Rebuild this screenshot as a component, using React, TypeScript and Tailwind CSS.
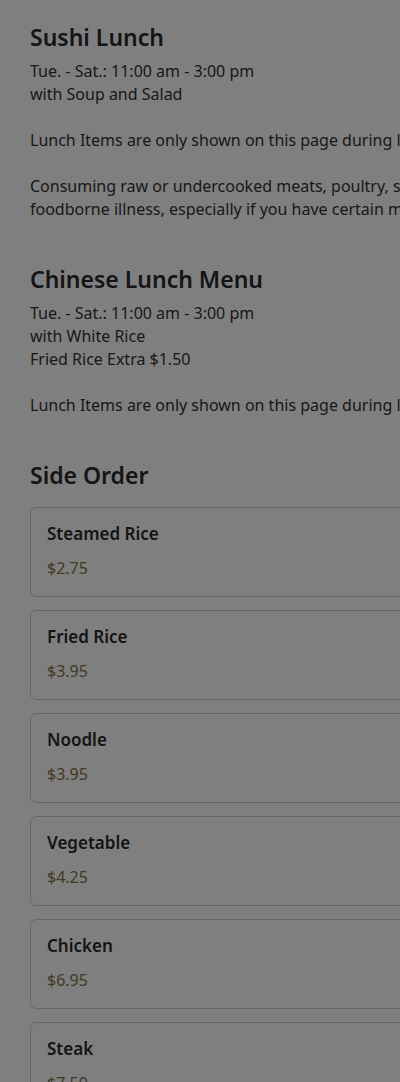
const sides = [
  { name: "Steamed Rice", price: "$2.75" },
  { name: "Fried Rice", price: "$3.95" },
  { name: "Noodle", price: "$3.95" },
  { name: "Vegetable", price: "$4.25" },
  { name: "Chicken", price: "$6.95" },
  { name: "Steak", price: "$7.50" },
];

function Lines({ lines }: { lines: string[] }) {
  return (
    <div className="whitespace-nowrap text-[16px] leading-[23px] text-[#333]">
      {lines.map((l, i) => (
        <div key={i}>{l === "" ? <br /> : l}</div>
      ))}
    </div>
  );
}

export default function App() {
  return (
    <div className="relative w-screen overflow-hidden bg-white font-['Noto_Sans',sans-serif]">
      <div className="w-[720px] px-[30px] pt-[21px] pb-10">
        {/* Sushi */}
        <section>
          <h2 className="mb-[7px] text-[23px] font-semibold leading-8 text-[#2a2a2a]">
            Sushi Lunch
          </h2>
          <Lines
            lines={[
              "Tue. - Sat.: 11:00 am - 3:00 pm",
              "with Soup and Salad",
              "",
              "Lunch Items are only shown on this page during lunch hours.",
              "",
              "Consuming raw or undercooked meats, poultry, seafood, shellfish or eggs may increase your",
              "foodborne illness, especially if you have certain medical conditions.",
            ]}
          />
        </section>

        {/* Chinese */}
        <section className="mt-[42px]">
          <h2 className="mb-[7px] text-[23px] font-semibold leading-8 text-[#2a2a2a]">
            Chinese Lunch Menu
          </h2>
          <Lines
            lines={[
              "Tue. - Sat.: 11:00 am - 3:00 pm",
              "with White Rice",
              "Fried Rice Extra $1.50",
              "",
              "Lunch Items are only shown on this page during lunch hours.",
            ]}
          />
        </section>

        {/* Side order */}
        <section className="mt-[42px]">
          <h2 className="mb-4 text-[23px] font-semibold leading-8 text-[#2a2a2a]">
            Side Order
          </h2>
          <div className="flex flex-col gap-[13px]">
            {sides.map((s) => (
              <div
                key={s.name}
                className="flex h-[90px] flex-col rounded-md border border-[#cfcfcf] px-4 pt-[14px]"
              >
                <div className="text-[17px] font-semibold leading-6 text-[#2a2a2a]">
                  {s.name}
                </div>
                <div className="mt-[11px] text-[16px] leading-[23px] text-[#857246]">
                  {s.price}
                </div>
              </div>
            ))}
          </div>
        </section>
      </div>

      {/* modal backdrop */}
      <div className="fixed inset-0 bg-black/50" />
    </div>
  );
}
